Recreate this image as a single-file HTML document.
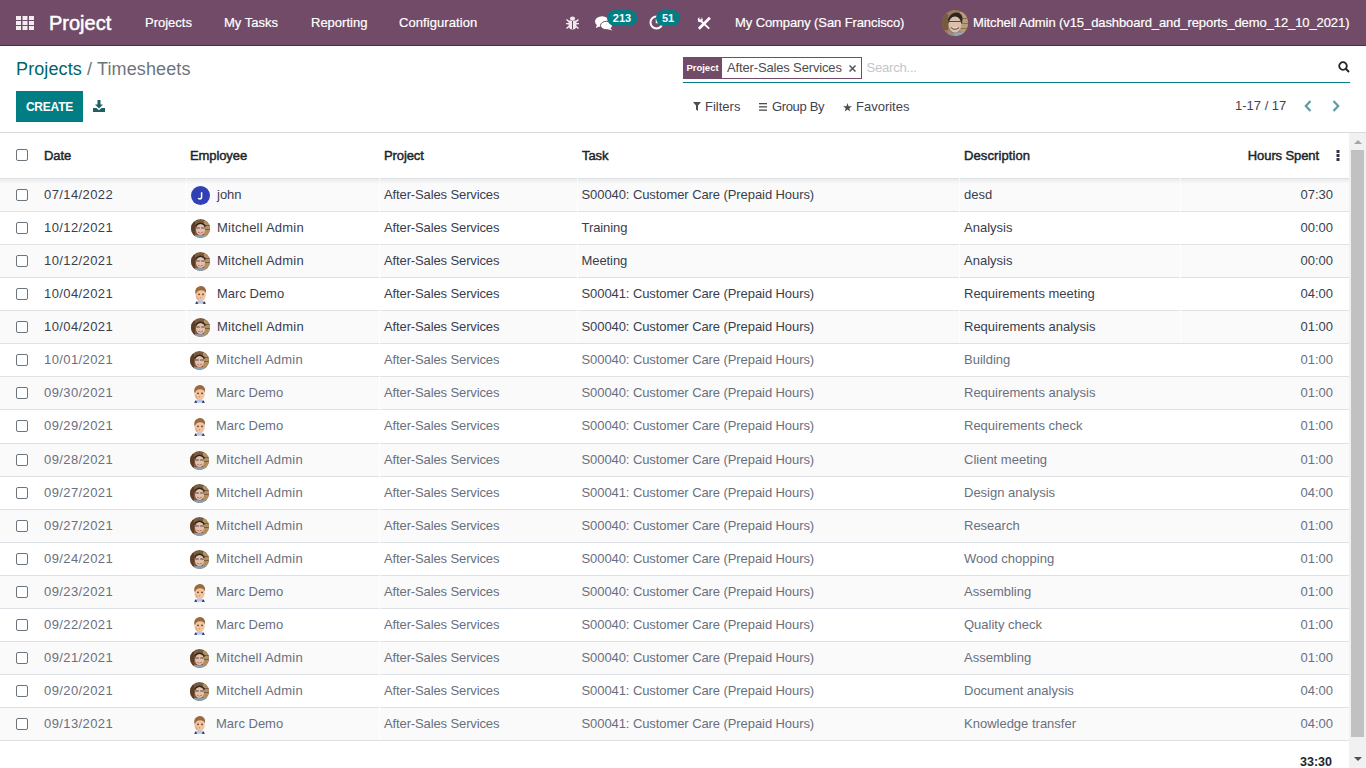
<!DOCTYPE html>
<html><head><meta charset="utf-8">
<style>
*{box-sizing:border-box;margin:0;padding:0}
html,body{width:1366px;height:768px;overflow:hidden;background:#fff;font-family:"Liberation Sans",sans-serif;font-size:13px;color:#4c4c4c}
.a{position:absolute;white-space:nowrap}
#nav{position:absolute;left:0;top:0;width:1366px;height:46px;background:#714b67;border-bottom:1px solid #4d3046}
#nav .t{position:absolute;color:#fff;font-size:13px;line-height:16px;top:15px;white-space:nowrap;-webkit-text-stroke:0.2px #fff}
#nav svg{position:absolute}
.badge{position:absolute;top:10px;height:16px;border-radius:8px;background:#017e84;color:#fff;font-weight:bold;font-size:11px;line-height:16px;text-align:center}
#cp{position:absolute;left:0;top:46px;width:1366px;height:87px;border-bottom:1px solid #d8dadd;background:#fff}
#cp .f{position:absolute;top:53px;line-height:16px;color:#3f4350;font-size:13px;white-space:nowrap}
#list{position:absolute;left:0;top:133px;width:1349px;height:635px;overflow:hidden}
.th{position:absolute;top:0;left:0;width:1349px;height:45px;background:#fff;font-weight:bold;color:#212529}
.th span{position:absolute;top:0;line-height:45px;white-space:nowrap;font-size:13px;font-weight:normal;-webkit-text-stroke:0.45px #212529;letter-spacing:-0.1px}
.row{position:absolute;left:0;width:1349px;height:33.0625px;border-top:1px solid #dee2e6;color:#393e4e}
.row.odd{background:#fafafa}
.row.mut{color:#6a6f7e}
.row .c{position:absolute;top:0;line-height:32px;white-space:nowrap}
.row .r{text-align:right}
.sep{position:absolute;top:-1px;width:1px;height:33px;background:#fff}
.cb{position:absolute;top:10px;width:12px;height:12px;border:1px solid #6c757d;border-radius:2px;background:#fff}
.avw{position:absolute;top:7px;width:19px;height:19px}
.av{display:block}
#shadow{position:absolute;left:0;top:46px;width:1349px;height:5px;background:linear-gradient(rgba(0,0,0,.06),rgba(0,0,0,0))}
#sb{position:absolute;left:1349px;top:133px;width:17px;height:635px;background:#f1f1f1}
</style></head><body>
<div id="nav">
  <svg style="left:16px;top:16px" width="18" height="14" viewBox="0 0 18 14" fill="#f0ecef">
    <rect x="0" y="0" width="5" height="4"/><rect x="6.5" y="0" width="5" height="4"/><rect x="13" y="0" width="5" height="4"/>
    <rect x="0" y="5" width="5" height="4"/><rect x="6.5" y="5" width="5" height="4"/><rect x="13" y="5" width="5" height="4"/>
    <rect x="0" y="10" width="5" height="4"/><rect x="6.5" y="10" width="5" height="4"/><rect x="13" y="10" width="5" height="4"/>
  </svg>
  <div class="t" style="left:49px;top:11px;font-size:20px;line-height:24px;-webkit-text-stroke:0.5px #fff">Project</div>
  <div class="t" style="left:145px">Projects</div>
  <div class="t" style="left:224px">My Tasks</div>
  <div class="t" style="left:311px">Reporting</div>
  <div class="t" style="left:399px;letter-spacing:.08px">Configuration</div>
  <!-- bug -->
  <svg style="left:566px;top:16px" width="13" height="14" viewBox="0 0 13 14" fill="#ece8ec">
    <ellipse cx="6.5" cy="2.6" rx="2.6" ry="2"/>
    <path d="M2.5 4.5 H10.5 V9 Q10.5 13.5 6.5 13.5 Q2.5 13.5 2.5 9Z"/>
    <rect x="0" y="7" width="13" height="1.3"/>
    <path d="M0.5 3.5 L2.8 5.5" stroke="#fff" stroke-width="1.2"/><path d="M12.5 3.5 L10.2 5.5" stroke="#fff" stroke-width="1.2"/>
    <path d="M0.5 12.5 L2.8 10.5" stroke="#fff" stroke-width="1.2"/><path d="M12.5 12.5 L10.2 10.5" stroke="#fff" stroke-width="1.2"/>
    <rect x="6" y="5" width="1" height="8" fill="#714b67"/>
  </svg>
  <!-- comments -->
  <svg style="left:595px;top:16px" width="18" height="15" viewBox="0 0 18 15" fill="#fff">
    <ellipse cx="7" cy="5.5" rx="7" ry="5.2"/><path d="M2 8.5 L0.8 12 L5.5 10Z"/>
    <ellipse cx="11.5" cy="9.5" rx="6" ry="4.2" fill="#fff" stroke="#714b67" stroke-width="1"/><path d="M15 12 L17.5 14.5 L12 13Z"/>
  </svg>
  <div class="badge" style="left:607px;width:30px">213</div>
  <!-- clock -->
  <svg style="left:649px;top:15px" width="15" height="15" viewBox="0 0 15 15">
    <circle cx="7.5" cy="7.5" r="6" stroke="#fff" stroke-width="2" fill="none"/>
    <path d="M7.5 4 V7.5 H10" stroke="#fff" stroke-width="1.5" fill="none"/>
  </svg>
  <div class="badge" style="left:656px;width:24px">51</div>
  <!-- tools -->
  <svg style="left:697px;top:16px" width="14" height="14" viewBox="0 0 14 14">
    <path d="M4.2 5.2 L12.2 12.6" stroke="#fff" stroke-width="1.9"/>
    <circle cx="3.2" cy="3.7" r="2.5" fill="#fff"/>
    <circle cx="3.4" cy="2.4" r="1.1" fill="#714b67"/>
    <rect x="2.7" y="0" width="1.6" height="2.4" fill="#714b67"/>
    <path d="M12.9 1.8 L1.9 12.8" stroke="#fff" stroke-width="2.7"/>
  </svg>
  <div class="t" style="left:735px;letter-spacing:-0.1px">My Company (San Francisco)</div>
  <svg style="left:942px;top:10px" width="26" height="26" viewBox="0 0 26 26">
    <defs><clipPath id="uav"><circle cx="13" cy="13" r="13"/></clipPath></defs>
    <g clip-path="url(#uav)"><rect width="26" height="26" fill="#9a7c5a"/><rect x="18" y="2" width="8" height="22" fill="#b79e76"/><rect x="18" y="8" width="8" height="1" fill="#8a6c4c"/><rect x="18" y="13" width="8" height="1" fill="#8a6c4c"/><rect x="18" y="18" width="8" height="1" fill="#8a6c4c"/><rect x="0" y="4" width="6" height="16" fill="#765a40"/>
    <path d="M6 9 Q9 2 15 2.5 Q21 3 20.5 10 L20 13 L6.5 13Z" fill="#2c2624"/><ellipse cx="13" cy="14.5" rx="6.3" ry="8" fill="#dcc0ae"/><path d="M6.5 11.5 H19.5" stroke="#5a4840" stroke-width="1.2"/><path d="M9 17.5 Q13 21 17 17.5" stroke="#8a6458" stroke-width="1.4" fill="#f4eae4"/><path d="M6 20 Q13 27 20 20 L20 26 L6 26Z" fill="#a08a80"/><rect x="12" y="22.5" width="10" height="5" fill="#8fa5b8"/></g>
  </svg>
  <div class="t" style="left:973px;letter-spacing:-0.09px">Mitchell Admin (v15_dashboard_and_reports_demo_12_10_2021)</div>
</div>
<div id="cp">
  <div class="a" style="left:16px;top:12px;font-size:18px;line-height:22px;color:#01666b;letter-spacing:.12px">Projects <span style="color:#6c757d">/ Timesheets</span></div>
  <div class="a" style="left:16px;top:45px;width:67px;height:31px;background:#017e84;color:#fff;font-weight:bold;font-size:12px;text-align:center;line-height:33px;letter-spacing:-.2px">CREATE</div>
  <!-- download -->
  <svg class="a" style="left:93px;top:54px" width="12" height="12" viewBox="0 0 12 12" fill="#1f5f66">
    <path d="M4.5 0 H7.5 V4.5 H10 L6 8.5 L2 4.5 H4.5Z"/>
    <path d="M0 8 H3.5 L6 10.3 L8.5 8 H12 V12 H0Z"/>
  </svg>
  <!-- facet -->
  <div class="a" style="left:683px;top:11px;width:179px;height:22px;border:1px solid #714b67;background:#fff"></div>
  <div class="a" style="left:683px;top:11px;width:39px;height:22px;background:#714b67;color:#fff;font-weight:bold;font-size:9.5px;line-height:22px;text-align:center">Project</div>
  <div class="a" style="left:727px;top:11px;line-height:22px;color:#4c4c4c;letter-spacing:-0.15px">After-Sales Services</div>
  <svg class="a" style="left:849px;top:19px" width="7" height="7" viewBox="0 0 7 7" stroke="#50545f" stroke-width="1.5"><path d="M0.5 0.5 L6.5 6.5 M6.5 0.5 L0.5 6.5"/></svg>
  <div class="a" style="left:866.5px;top:11px;line-height:22px;color:#c4c5cb;letter-spacing:-.2px">Search...</div>
  <div class="a" style="left:683px;top:36px;width:667px;height:1px;background:#017e84"></div>
  <svg class="a" style="left:1338px;top:15px" width="12" height="12" viewBox="0 0 12 12" fill="none" stroke="#212529">
    <circle cx="5" cy="5" r="3.8" stroke-width="1.8"/><path d="M7.8 7.8 L11 11" stroke-width="2"/>
  </svg>
  <!-- filters -->
  <svg class="a" style="left:693px;top:56px" width="8" height="9" viewBox="0 0 8 9" fill="#4c4c4c"><path d="M0 0 H8 L5 3.5 V9 L3 7.5 V3.5Z"/></svg>
  <div class="f" style="left:705px">Filters</div>
  <svg class="a" style="left:759px;top:57px" width="8" height="8" viewBox="0 0 8 8" fill="#4c4c4c"><rect y="0" width="8" height="1.3"/><rect y="3.2" width="8" height="1.3"/><rect y="6.5" width="8" height="1.3"/></svg>
  <div class="f" style="left:772px;letter-spacing:-0.35px">Group By</div>
  <svg class="a" style="left:843px;top:56.5px" width="9" height="9" viewBox="0 0 10 10" fill="#4c4c4c"><path d="M5 0 L6.2 3.5 H10 L7 5.8 L8.1 9.5 L5 7.2 L1.9 9.5 L3 5.8 L0 3.5 H3.8Z"/></svg>
  <div class="f" style="left:856px">Favorites</div>
  <div class="f" style="left:1235px;top:52px">1-17 / 17</div>
  <svg class="a" style="left:1304px;top:54px" width="8" height="12" viewBox="0 0 8 12" fill="none" stroke="#5a9ea2" stroke-width="2.2"><path d="M6.5 1 L1.8 6 L6.5 11"/></svg>
  <svg class="a" style="left:1332px;top:54px" width="8" height="12" viewBox="0 0 8 12" fill="none" stroke="#5a9ea2" stroke-width="2.2"><path d="M1.5 1 L6.2 6 L1.5 11"/></svg>
</div>
<div id="list">
  <div class="row odd" style="top:45.0000px"><i class="sep" style="left:186px"></i><i class="sep" style="left:379px"></i><i class="sep" style="left:577px"></i><i class="sep" style="left:959px"></i><i class="sep" style="left:1180px"></i><i class="cb" style="left:16px"></i><span class="c" style="left:44px;letter-spacing:.4px">07/14/2022</span><span class="avw" style="left:191px"><svg class="av" width="19" height="19" viewBox="0 0 19 19"><circle cx="9.5" cy="9.5" r="9.5" fill="#3140b4"/><path d="M10.6 6.2 V11 Q10.6 12.9 8.8 12.9 Q7.6 12.9 7.2 12" stroke="#fff" stroke-width="1.5" fill="none"/></svg></span><span class="c" style="left:217px">john</span><span class="c" style="left:384px;letter-spacing:-.12px">After-Sales Services</span><span class="c" style="left:581.5px;letter-spacing:-.08px">S00040: Customer Care (Prepaid Hours)</span><span class="c" style="left:964px">desd</span><span class="c r" style="right:16px">07:30</span></div>
<div class="row" style="top:78.0625px"><i class="sep" style="left:186px"></i><i class="sep" style="left:379px"></i><i class="sep" style="left:577px"></i><i class="sep" style="left:959px"></i><i class="sep" style="left:1180px"></i><i class="cb" style="left:16px"></i><span class="c" style="left:44px;letter-spacing:.4px">10/12/2021</span><span class="avw" style="left:191px"><svg class="av" width="19" height="19" viewBox="0 0 19 19"><defs><clipPath id="c1"><circle cx="9.5" cy="9.5" r="9.5"/></clipPath></defs><g clip-path="url(#c1)"><rect width="19" height="19" fill="#7b5b3f"/><rect x="13" y="2" width="6" height="15" fill="#b08f63"/><rect x="13" y="6" width="6" height="1" fill="#7b5b3f"/><rect x="13" y="10" width="6" height="1" fill="#7b5b3f"/><rect x="0" y="3" width="4" height="13" fill="#5b3d28"/><path d="M4.5 6 Q9.5 1 14.5 6 L14.5 8 L4.5 8Z" fill="#2b2320"/><ellipse cx="9.5" cy="10.5" rx="4.5" ry="5.5" fill="#e2c0aa"/><path d="M5.2 9 H8.8 M10.2 9 H13.8" stroke="#55453f" stroke-width="1.1"/><path d="M7 13.2 Q9.5 14.8 12 13.2" stroke="#c46868" stroke-width="1" fill="#fff"/><rect x="4" y="16.2" width="11" height="3" fill="#8ba2b3"/></g></svg></span><span class="c" style="left:217px;letter-spacing:.22px">Mitchell Admin</span><span class="c" style="left:384px;letter-spacing:-.12px">After-Sales Services</span><span class="c" style="left:581.5px;letter-spacing:-.08px">Training</span><span class="c" style="left:964px">Analysis</span><span class="c r" style="right:16px">00:00</span></div>
<div class="row odd" style="top:111.1250px"><i class="sep" style="left:186px"></i><i class="sep" style="left:379px"></i><i class="sep" style="left:577px"></i><i class="sep" style="left:959px"></i><i class="sep" style="left:1180px"></i><i class="cb" style="left:16px"></i><span class="c" style="left:44px;letter-spacing:.4px">10/12/2021</span><span class="avw" style="left:191px"><svg class="av" width="19" height="19" viewBox="0 0 19 19"><defs><clipPath id="c2"><circle cx="9.5" cy="9.5" r="9.5"/></clipPath></defs><g clip-path="url(#c2)"><rect width="19" height="19" fill="#7b5b3f"/><rect x="13" y="2" width="6" height="15" fill="#b08f63"/><rect x="13" y="6" width="6" height="1" fill="#7b5b3f"/><rect x="13" y="10" width="6" height="1" fill="#7b5b3f"/><rect x="0" y="3" width="4" height="13" fill="#5b3d28"/><path d="M4.5 6 Q9.5 1 14.5 6 L14.5 8 L4.5 8Z" fill="#2b2320"/><ellipse cx="9.5" cy="10.5" rx="4.5" ry="5.5" fill="#e2c0aa"/><path d="M5.2 9 H8.8 M10.2 9 H13.8" stroke="#55453f" stroke-width="1.1"/><path d="M7 13.2 Q9.5 14.8 12 13.2" stroke="#c46868" stroke-width="1" fill="#fff"/><rect x="4" y="16.2" width="11" height="3" fill="#8ba2b3"/></g></svg></span><span class="c" style="left:217px;letter-spacing:.22px">Mitchell Admin</span><span class="c" style="left:384px;letter-spacing:-.12px">After-Sales Services</span><span class="c" style="left:581.5px;letter-spacing:-.08px">Meeting</span><span class="c" style="left:964px">Analysis</span><span class="c r" style="right:16px">00:00</span></div>
<div class="row" style="top:144.1875px"><i class="sep" style="left:186px"></i><i class="sep" style="left:379px"></i><i class="sep" style="left:577px"></i><i class="sep" style="left:959px"></i><i class="sep" style="left:1180px"></i><i class="cb" style="left:16px"></i><span class="c" style="left:44px;letter-spacing:.4px">10/04/2021</span><span class="avw" style="left:191px"><svg class="av" width="19" height="19" viewBox="0 0 19 19"><ellipse cx="9.6" cy="9.8" rx="5.2" ry="6.6" fill="#f0c49f"/><path d="M4.2 8 Q3.8 2.5 8.5 1.2 Q13.5 0.5 15 5 L15 8.5 Q13.5 5 10 5.2 Q6 5.5 5 9Z" fill="#9a6a3e"/><path d="M5 10 Q7 12 8 15 L6 14Z" fill="#d9a07a"/><circle cx="8" cy="9.4" r=".8" fill="#4a3020"/><circle cx="12" cy="9.4" r=".8" fill="#4a3020"/><circle cx="9.5" cy="12.8" r=".7" fill="#e08080"/><path d="M4.2 18.8 Q5 15.8 9.5 15.5 Q14 15.8 14.8 18.8Z" fill="#b3c8ee"/><path d="M4.2 18.8 L5.8 16.3 L7.2 18.8Z" fill="#1e2340"/><path d="M14.8 18.8 L13.2 16.3 L11.8 18.8Z" fill="#1e2340"/></svg></span><span class="c" style="left:217px">Marc Demo</span><span class="c" style="left:384px;letter-spacing:-.12px">After-Sales Services</span><span class="c" style="left:581.5px;letter-spacing:-.08px">S00041: Customer Care (Prepaid Hours)</span><span class="c" style="left:964px">Requirements meeting</span><span class="c r" style="right:16px">04:00</span></div>
<div class="row odd" style="top:177.2500px"><i class="sep" style="left:186px"></i><i class="sep" style="left:379px"></i><i class="sep" style="left:577px"></i><i class="sep" style="left:959px"></i><i class="sep" style="left:1180px"></i><i class="cb" style="left:16px"></i><span class="c" style="left:44px;letter-spacing:.4px">10/04/2021</span><span class="avw" style="left:191px"><svg class="av" width="19" height="19" viewBox="0 0 19 19"><defs><clipPath id="c4"><circle cx="9.5" cy="9.5" r="9.5"/></clipPath></defs><g clip-path="url(#c4)"><rect width="19" height="19" fill="#7b5b3f"/><rect x="13" y="2" width="6" height="15" fill="#b08f63"/><rect x="13" y="6" width="6" height="1" fill="#7b5b3f"/><rect x="13" y="10" width="6" height="1" fill="#7b5b3f"/><rect x="0" y="3" width="4" height="13" fill="#5b3d28"/><path d="M4.5 6 Q9.5 1 14.5 6 L14.5 8 L4.5 8Z" fill="#2b2320"/><ellipse cx="9.5" cy="10.5" rx="4.5" ry="5.5" fill="#e2c0aa"/><path d="M5.2 9 H8.8 M10.2 9 H13.8" stroke="#55453f" stroke-width="1.1"/><path d="M7 13.2 Q9.5 14.8 12 13.2" stroke="#c46868" stroke-width="1" fill="#fff"/><rect x="4" y="16.2" width="11" height="3" fill="#8ba2b3"/></g></svg></span><span class="c" style="left:217px;letter-spacing:.22px">Mitchell Admin</span><span class="c" style="left:384px;letter-spacing:-.12px">After-Sales Services</span><span class="c" style="left:581.5px;letter-spacing:-.08px">S00040: Customer Care (Prepaid Hours)</span><span class="c" style="left:964px">Requirements analysis</span><span class="c r" style="right:16px">01:00</span></div>
<div class="row mut" style="top:210.3125px"><i class="sep" style="left:379px"></i><i class="cb" style="left:16px"></i><span class="c" style="left:44px;letter-spacing:.4px">10/01/2021</span><span class="avw" style="left:190px"><svg class="av" width="19" height="19" viewBox="0 0 19 19"><defs><clipPath id="c5"><circle cx="9.5" cy="9.5" r="9.5"/></clipPath></defs><g clip-path="url(#c5)"><rect width="19" height="19" fill="#7b5b3f"/><rect x="13" y="2" width="6" height="15" fill="#b08f63"/><rect x="13" y="6" width="6" height="1" fill="#7b5b3f"/><rect x="13" y="10" width="6" height="1" fill="#7b5b3f"/><rect x="0" y="3" width="4" height="13" fill="#5b3d28"/><path d="M4.5 6 Q9.5 1 14.5 6 L14.5 8 L4.5 8Z" fill="#2b2320"/><ellipse cx="9.5" cy="10.5" rx="4.5" ry="5.5" fill="#e2c0aa"/><path d="M5.2 9 H8.8 M10.2 9 H13.8" stroke="#55453f" stroke-width="1.1"/><path d="M7 13.2 Q9.5 14.8 12 13.2" stroke="#c46868" stroke-width="1" fill="#fff"/><rect x="4" y="16.2" width="11" height="3" fill="#8ba2b3"/></g></svg></span><span class="c" style="left:216px;letter-spacing:.22px">Mitchell Admin</span><span class="c" style="left:384px;letter-spacing:-.12px">After-Sales Services</span><span class="c" style="left:581.5px;letter-spacing:-.08px">S00040: Customer Care (Prepaid Hours)</span><span class="c" style="left:964px">Building</span><span class="c r" style="right:16px">01:00</span></div>
<div class="row odd mut" style="top:243.3750px"><i class="sep" style="left:379px"></i><i class="cb" style="left:16px"></i><span class="c" style="left:44px;letter-spacing:.4px">09/30/2021</span><span class="avw" style="left:190px"><svg class="av" width="19" height="19" viewBox="0 0 19 19"><ellipse cx="9.6" cy="9.8" rx="5.2" ry="6.6" fill="#f0c49f"/><path d="M4.2 8 Q3.8 2.5 8.5 1.2 Q13.5 0.5 15 5 L15 8.5 Q13.5 5 10 5.2 Q6 5.5 5 9Z" fill="#9a6a3e"/><path d="M5 10 Q7 12 8 15 L6 14Z" fill="#d9a07a"/><circle cx="8" cy="9.4" r=".8" fill="#4a3020"/><circle cx="12" cy="9.4" r=".8" fill="#4a3020"/><circle cx="9.5" cy="12.8" r=".7" fill="#e08080"/><path d="M4.2 18.8 Q5 15.8 9.5 15.5 Q14 15.8 14.8 18.8Z" fill="#b3c8ee"/><path d="M4.2 18.8 L5.8 16.3 L7.2 18.8Z" fill="#1e2340"/><path d="M14.8 18.8 L13.2 16.3 L11.8 18.8Z" fill="#1e2340"/></svg></span><span class="c" style="left:216px">Marc Demo</span><span class="c" style="left:384px;letter-spacing:-.12px">After-Sales Services</span><span class="c" style="left:581.5px;letter-spacing:-.08px">S00040: Customer Care (Prepaid Hours)</span><span class="c" style="left:964px">Requirements analysis</span><span class="c r" style="right:16px">01:00</span></div>
<div class="row mut" style="top:276.4375px"><i class="sep" style="left:379px"></i><i class="cb" style="left:16px"></i><span class="c" style="left:44px;letter-spacing:.4px">09/29/2021</span><span class="avw" style="left:190px"><svg class="av" width="19" height="19" viewBox="0 0 19 19"><ellipse cx="9.6" cy="9.8" rx="5.2" ry="6.6" fill="#f0c49f"/><path d="M4.2 8 Q3.8 2.5 8.5 1.2 Q13.5 0.5 15 5 L15 8.5 Q13.5 5 10 5.2 Q6 5.5 5 9Z" fill="#9a6a3e"/><path d="M5 10 Q7 12 8 15 L6 14Z" fill="#d9a07a"/><circle cx="8" cy="9.4" r=".8" fill="#4a3020"/><circle cx="12" cy="9.4" r=".8" fill="#4a3020"/><circle cx="9.5" cy="12.8" r=".7" fill="#e08080"/><path d="M4.2 18.8 Q5 15.8 9.5 15.5 Q14 15.8 14.8 18.8Z" fill="#b3c8ee"/><path d="M4.2 18.8 L5.8 16.3 L7.2 18.8Z" fill="#1e2340"/><path d="M14.8 18.8 L13.2 16.3 L11.8 18.8Z" fill="#1e2340"/></svg></span><span class="c" style="left:216px">Marc Demo</span><span class="c" style="left:384px;letter-spacing:-.12px">After-Sales Services</span><span class="c" style="left:581.5px;letter-spacing:-.08px">S00040: Customer Care (Prepaid Hours)</span><span class="c" style="left:964px">Requirements check</span><span class="c r" style="right:16px">01:00</span></div>
<div class="row odd mut" style="top:309.5000px"><i class="sep" style="left:379px"></i><i class="cb" style="left:16px"></i><span class="c" style="left:44px;letter-spacing:.4px">09/28/2021</span><span class="avw" style="left:190px"><svg class="av" width="19" height="19" viewBox="0 0 19 19"><defs><clipPath id="c8"><circle cx="9.5" cy="9.5" r="9.5"/></clipPath></defs><g clip-path="url(#c8)"><rect width="19" height="19" fill="#7b5b3f"/><rect x="13" y="2" width="6" height="15" fill="#b08f63"/><rect x="13" y="6" width="6" height="1" fill="#7b5b3f"/><rect x="13" y="10" width="6" height="1" fill="#7b5b3f"/><rect x="0" y="3" width="4" height="13" fill="#5b3d28"/><path d="M4.5 6 Q9.5 1 14.5 6 L14.5 8 L4.5 8Z" fill="#2b2320"/><ellipse cx="9.5" cy="10.5" rx="4.5" ry="5.5" fill="#e2c0aa"/><path d="M5.2 9 H8.8 M10.2 9 H13.8" stroke="#55453f" stroke-width="1.1"/><path d="M7 13.2 Q9.5 14.8 12 13.2" stroke="#c46868" stroke-width="1" fill="#fff"/><rect x="4" y="16.2" width="11" height="3" fill="#8ba2b3"/></g></svg></span><span class="c" style="left:216px;letter-spacing:.22px">Mitchell Admin</span><span class="c" style="left:384px;letter-spacing:-.12px">After-Sales Services</span><span class="c" style="left:581.5px;letter-spacing:-.08px">S00040: Customer Care (Prepaid Hours)</span><span class="c" style="left:964px">Client meeting</span><span class="c r" style="right:16px">01:00</span></div>
<div class="row mut" style="top:342.5625px"><i class="sep" style="left:379px"></i><i class="cb" style="left:16px"></i><span class="c" style="left:44px;letter-spacing:.4px">09/27/2021</span><span class="avw" style="left:190px"><svg class="av" width="19" height="19" viewBox="0 0 19 19"><defs><clipPath id="c9"><circle cx="9.5" cy="9.5" r="9.5"/></clipPath></defs><g clip-path="url(#c9)"><rect width="19" height="19" fill="#7b5b3f"/><rect x="13" y="2" width="6" height="15" fill="#b08f63"/><rect x="13" y="6" width="6" height="1" fill="#7b5b3f"/><rect x="13" y="10" width="6" height="1" fill="#7b5b3f"/><rect x="0" y="3" width="4" height="13" fill="#5b3d28"/><path d="M4.5 6 Q9.5 1 14.5 6 L14.5 8 L4.5 8Z" fill="#2b2320"/><ellipse cx="9.5" cy="10.5" rx="4.5" ry="5.5" fill="#e2c0aa"/><path d="M5.2 9 H8.8 M10.2 9 H13.8" stroke="#55453f" stroke-width="1.1"/><path d="M7 13.2 Q9.5 14.8 12 13.2" stroke="#c46868" stroke-width="1" fill="#fff"/><rect x="4" y="16.2" width="11" height="3" fill="#8ba2b3"/></g></svg></span><span class="c" style="left:216px;letter-spacing:.22px">Mitchell Admin</span><span class="c" style="left:384px;letter-spacing:-.12px">After-Sales Services</span><span class="c" style="left:581.5px;letter-spacing:-.08px">S00041: Customer Care (Prepaid Hours)</span><span class="c" style="left:964px">Design analysis</span><span class="c r" style="right:16px">04:00</span></div>
<div class="row odd mut" style="top:375.6250px"><i class="sep" style="left:379px"></i><i class="cb" style="left:16px"></i><span class="c" style="left:44px;letter-spacing:.4px">09/27/2021</span><span class="avw" style="left:190px"><svg class="av" width="19" height="19" viewBox="0 0 19 19"><defs><clipPath id="c10"><circle cx="9.5" cy="9.5" r="9.5"/></clipPath></defs><g clip-path="url(#c10)"><rect width="19" height="19" fill="#7b5b3f"/><rect x="13" y="2" width="6" height="15" fill="#b08f63"/><rect x="13" y="6" width="6" height="1" fill="#7b5b3f"/><rect x="13" y="10" width="6" height="1" fill="#7b5b3f"/><rect x="0" y="3" width="4" height="13" fill="#5b3d28"/><path d="M4.5 6 Q9.5 1 14.5 6 L14.5 8 L4.5 8Z" fill="#2b2320"/><ellipse cx="9.5" cy="10.5" rx="4.5" ry="5.5" fill="#e2c0aa"/><path d="M5.2 9 H8.8 M10.2 9 H13.8" stroke="#55453f" stroke-width="1.1"/><path d="M7 13.2 Q9.5 14.8 12 13.2" stroke="#c46868" stroke-width="1" fill="#fff"/><rect x="4" y="16.2" width="11" height="3" fill="#8ba2b3"/></g></svg></span><span class="c" style="left:216px;letter-spacing:.22px">Mitchell Admin</span><span class="c" style="left:384px;letter-spacing:-.12px">After-Sales Services</span><span class="c" style="left:581.5px;letter-spacing:-.08px">S00040: Customer Care (Prepaid Hours)</span><span class="c" style="left:964px">Research</span><span class="c r" style="right:16px">01:00</span></div>
<div class="row mut" style="top:408.6875px"><i class="sep" style="left:379px"></i><i class="cb" style="left:16px"></i><span class="c" style="left:44px;letter-spacing:.4px">09/24/2021</span><span class="avw" style="left:190px"><svg class="av" width="19" height="19" viewBox="0 0 19 19"><defs><clipPath id="c11"><circle cx="9.5" cy="9.5" r="9.5"/></clipPath></defs><g clip-path="url(#c11)"><rect width="19" height="19" fill="#7b5b3f"/><rect x="13" y="2" width="6" height="15" fill="#b08f63"/><rect x="13" y="6" width="6" height="1" fill="#7b5b3f"/><rect x="13" y="10" width="6" height="1" fill="#7b5b3f"/><rect x="0" y="3" width="4" height="13" fill="#5b3d28"/><path d="M4.5 6 Q9.5 1 14.5 6 L14.5 8 L4.5 8Z" fill="#2b2320"/><ellipse cx="9.5" cy="10.5" rx="4.5" ry="5.5" fill="#e2c0aa"/><path d="M5.2 9 H8.8 M10.2 9 H13.8" stroke="#55453f" stroke-width="1.1"/><path d="M7 13.2 Q9.5 14.8 12 13.2" stroke="#c46868" stroke-width="1" fill="#fff"/><rect x="4" y="16.2" width="11" height="3" fill="#8ba2b3"/></g></svg></span><span class="c" style="left:216px;letter-spacing:.22px">Mitchell Admin</span><span class="c" style="left:384px;letter-spacing:-.12px">After-Sales Services</span><span class="c" style="left:581.5px;letter-spacing:-.08px">S00040: Customer Care (Prepaid Hours)</span><span class="c" style="left:964px">Wood chopping</span><span class="c r" style="right:16px">01:00</span></div>
<div class="row odd mut" style="top:441.7500px"><i class="sep" style="left:379px"></i><i class="cb" style="left:16px"></i><span class="c" style="left:44px;letter-spacing:.4px">09/23/2021</span><span class="avw" style="left:190px"><svg class="av" width="19" height="19" viewBox="0 0 19 19"><ellipse cx="9.6" cy="9.8" rx="5.2" ry="6.6" fill="#f0c49f"/><path d="M4.2 8 Q3.8 2.5 8.5 1.2 Q13.5 0.5 15 5 L15 8.5 Q13.5 5 10 5.2 Q6 5.5 5 9Z" fill="#9a6a3e"/><path d="M5 10 Q7 12 8 15 L6 14Z" fill="#d9a07a"/><circle cx="8" cy="9.4" r=".8" fill="#4a3020"/><circle cx="12" cy="9.4" r=".8" fill="#4a3020"/><circle cx="9.5" cy="12.8" r=".7" fill="#e08080"/><path d="M4.2 18.8 Q5 15.8 9.5 15.5 Q14 15.8 14.8 18.8Z" fill="#b3c8ee"/><path d="M4.2 18.8 L5.8 16.3 L7.2 18.8Z" fill="#1e2340"/><path d="M14.8 18.8 L13.2 16.3 L11.8 18.8Z" fill="#1e2340"/></svg></span><span class="c" style="left:216px">Marc Demo</span><span class="c" style="left:384px;letter-spacing:-.12px">After-Sales Services</span><span class="c" style="left:581.5px;letter-spacing:-.08px">S00040: Customer Care (Prepaid Hours)</span><span class="c" style="left:964px">Assembling</span><span class="c r" style="right:16px">01:00</span></div>
<div class="row mut" style="top:474.8125px"><i class="sep" style="left:379px"></i><i class="cb" style="left:16px"></i><span class="c" style="left:44px;letter-spacing:.4px">09/22/2021</span><span class="avw" style="left:190px"><svg class="av" width="19" height="19" viewBox="0 0 19 19"><ellipse cx="9.6" cy="9.8" rx="5.2" ry="6.6" fill="#f0c49f"/><path d="M4.2 8 Q3.8 2.5 8.5 1.2 Q13.5 0.5 15 5 L15 8.5 Q13.5 5 10 5.2 Q6 5.5 5 9Z" fill="#9a6a3e"/><path d="M5 10 Q7 12 8 15 L6 14Z" fill="#d9a07a"/><circle cx="8" cy="9.4" r=".8" fill="#4a3020"/><circle cx="12" cy="9.4" r=".8" fill="#4a3020"/><circle cx="9.5" cy="12.8" r=".7" fill="#e08080"/><path d="M4.2 18.8 Q5 15.8 9.5 15.5 Q14 15.8 14.8 18.8Z" fill="#b3c8ee"/><path d="M4.2 18.8 L5.8 16.3 L7.2 18.8Z" fill="#1e2340"/><path d="M14.8 18.8 L13.2 16.3 L11.8 18.8Z" fill="#1e2340"/></svg></span><span class="c" style="left:216px">Marc Demo</span><span class="c" style="left:384px;letter-spacing:-.12px">After-Sales Services</span><span class="c" style="left:581.5px;letter-spacing:-.08px">S00040: Customer Care (Prepaid Hours)</span><span class="c" style="left:964px">Quality check</span><span class="c r" style="right:16px">01:00</span></div>
<div class="row odd mut" style="top:507.8750px"><i class="sep" style="left:379px"></i><i class="cb" style="left:16px"></i><span class="c" style="left:44px;letter-spacing:.4px">09/21/2021</span><span class="avw" style="left:190px"><svg class="av" width="19" height="19" viewBox="0 0 19 19"><defs><clipPath id="c14"><circle cx="9.5" cy="9.5" r="9.5"/></clipPath></defs><g clip-path="url(#c14)"><rect width="19" height="19" fill="#7b5b3f"/><rect x="13" y="2" width="6" height="15" fill="#b08f63"/><rect x="13" y="6" width="6" height="1" fill="#7b5b3f"/><rect x="13" y="10" width="6" height="1" fill="#7b5b3f"/><rect x="0" y="3" width="4" height="13" fill="#5b3d28"/><path d="M4.5 6 Q9.5 1 14.5 6 L14.5 8 L4.5 8Z" fill="#2b2320"/><ellipse cx="9.5" cy="10.5" rx="4.5" ry="5.5" fill="#e2c0aa"/><path d="M5.2 9 H8.8 M10.2 9 H13.8" stroke="#55453f" stroke-width="1.1"/><path d="M7 13.2 Q9.5 14.8 12 13.2" stroke="#c46868" stroke-width="1" fill="#fff"/><rect x="4" y="16.2" width="11" height="3" fill="#8ba2b3"/></g></svg></span><span class="c" style="left:216px;letter-spacing:.22px">Mitchell Admin</span><span class="c" style="left:384px;letter-spacing:-.12px">After-Sales Services</span><span class="c" style="left:581.5px;letter-spacing:-.08px">S00040: Customer Care (Prepaid Hours)</span><span class="c" style="left:964px">Assembling</span><span class="c r" style="right:16px">01:00</span></div>
<div class="row mut" style="top:540.9375px"><i class="sep" style="left:379px"></i><i class="cb" style="left:16px"></i><span class="c" style="left:44px;letter-spacing:.4px">09/20/2021</span><span class="avw" style="left:190px"><svg class="av" width="19" height="19" viewBox="0 0 19 19"><defs><clipPath id="c15"><circle cx="9.5" cy="9.5" r="9.5"/></clipPath></defs><g clip-path="url(#c15)"><rect width="19" height="19" fill="#7b5b3f"/><rect x="13" y="2" width="6" height="15" fill="#b08f63"/><rect x="13" y="6" width="6" height="1" fill="#7b5b3f"/><rect x="13" y="10" width="6" height="1" fill="#7b5b3f"/><rect x="0" y="3" width="4" height="13" fill="#5b3d28"/><path d="M4.5 6 Q9.5 1 14.5 6 L14.5 8 L4.5 8Z" fill="#2b2320"/><ellipse cx="9.5" cy="10.5" rx="4.5" ry="5.5" fill="#e2c0aa"/><path d="M5.2 9 H8.8 M10.2 9 H13.8" stroke="#55453f" stroke-width="1.1"/><path d="M7 13.2 Q9.5 14.8 12 13.2" stroke="#c46868" stroke-width="1" fill="#fff"/><rect x="4" y="16.2" width="11" height="3" fill="#8ba2b3"/></g></svg></span><span class="c" style="left:216px;letter-spacing:.22px">Mitchell Admin</span><span class="c" style="left:384px;letter-spacing:-.12px">After-Sales Services</span><span class="c" style="left:581.5px;letter-spacing:-.08px">S00041: Customer Care (Prepaid Hours)</span><span class="c" style="left:964px">Document analysis</span><span class="c r" style="right:16px">04:00</span></div>
<div class="row odd mut" style="top:574.0000px"><i class="sep" style="left:379px"></i><i class="cb" style="left:16px"></i><span class="c" style="left:44px;letter-spacing:.4px">09/13/2021</span><span class="avw" style="left:190px"><svg class="av" width="19" height="19" viewBox="0 0 19 19"><ellipse cx="9.6" cy="9.8" rx="5.2" ry="6.6" fill="#f0c49f"/><path d="M4.2 8 Q3.8 2.5 8.5 1.2 Q13.5 0.5 15 5 L15 8.5 Q13.5 5 10 5.2 Q6 5.5 5 9Z" fill="#9a6a3e"/><path d="M5 10 Q7 12 8 15 L6 14Z" fill="#d9a07a"/><circle cx="8" cy="9.4" r=".8" fill="#4a3020"/><circle cx="12" cy="9.4" r=".8" fill="#4a3020"/><circle cx="9.5" cy="12.8" r=".7" fill="#e08080"/><path d="M4.2 18.8 Q5 15.8 9.5 15.5 Q14 15.8 14.8 18.8Z" fill="#b3c8ee"/><path d="M4.2 18.8 L5.8 16.3 L7.2 18.8Z" fill="#1e2340"/><path d="M14.8 18.8 L13.2 16.3 L11.8 18.8Z" fill="#1e2340"/></svg></span><span class="c" style="left:216px">Marc Demo</span><span class="c" style="left:384px;letter-spacing:-.12px">After-Sales Services</span><span class="c" style="left:581.5px;letter-spacing:-.08px">S00041: Customer Care (Prepaid Hours)</span><span class="c" style="left:964px">Knowledge transfer</span><span class="c r" style="right:16px">04:00</span></div>
<div class="a" style="left:0;top:607.0625px;width:1349px;height:1px;background:#dee2e6"></div>
  <div class="th">
    <i class="cb" style="left:16px;top:16px"></i>
    <span style="left:44px">Date</span>
    <span style="left:190px">Employee</span>
    <span style="left:384px">Project</span>
    <span style="left:582px">Task</span>
    <span style="left:964px;letter-spacing:.1px">Description</span>
    <span style="right:30px">Hours Spent</span>
    <svg class="a" style="left:1336px;top:17px" width="4" height="11" viewBox="0 0 4 11" fill="#2f3446"><rect x="0.5" y="0" width="3" height="3"/><rect x="0.5" y="4" width="3" height="3"/><rect x="0.5" y="8" width="3" height="3"/></svg>
  </div>
  <div id="shadow"></div>
  <div class="a" style="top:613px;right:17px;font-weight:bold;color:#212529;line-height:33px;font-size:12.5px">33:30</div>
</div>
<div id="sb">
  <svg class="a" style="left:5px;top:7px" width="8" height="4" viewBox="0 0 8 4" fill="#a3a8a3"><path d="M0 4 L4 0 L8 4Z"/></svg>
  <div class="a" style="left:2px;top:17px;width:13px;height:587px;background:#c1c1c1"></div>
  <svg class="a" style="left:4.5px;top:624px" width="8" height="4" viewBox="0 0 8 4" fill="#4f4f58"><path d="M0 0 L8 0 L4 4Z"/></svg>
</div>
</body></html>
